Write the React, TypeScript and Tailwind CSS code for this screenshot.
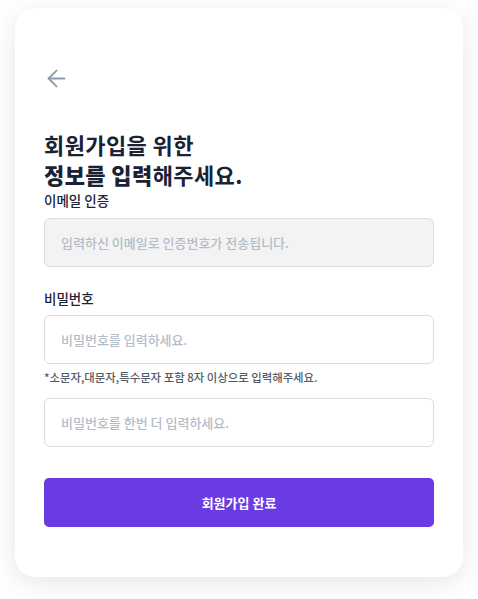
import React from "react";
import { ArrowLeft } from "lucide-react";

const font = { fontFamily: '"Noto Sans CJK KR", "Noto Sans", sans-serif' };

export default function App() {
  return (
    <div className="min-h-[599px] w-[478px] bg-white pt-2" style={font}>
      <div className="mx-[15px] w-[448px] rounded-[20px] bg-white px-[29px] pt-[57px] pb-[50px] shadow-[0_6px_24px_rgba(60,60,90,0.12)]">
        {/* Back */}
        <button className="-ml-[1px] flex h-[27px] w-[27px] items-center justify-center text-[#8b9bb3]">
          <ArrowLeft size={27} strokeWidth={1.7} />
        </button>

        <h1 className="mt-[37px] text-[22px] font-bold tracking-[0.4px] text-[#1b2234]">
          <div className="h-[30px] leading-[30px]">회원가입을 위한</div>
          <div className="h-[30px] leading-[30px]">
            <span className="font-extrabold">정보를 입력</span>해주세요.
          </div>
        </h1>

        <label className="mt-[2px] block text-[13.5px] leading-[18px] font-medium text-[#1b2234]">이메일 인증</label>
        <div className="mt-[9px] flex h-[49px] items-center rounded-[6px] border border-[#dcdcdc] bg-[#f3f3f3] px-4 text-[13px] font-medium text-[#b4bcc8]">
          입력하신 이메일로 인증번호가 전송됩니다.
        </div>

        <label className="mt-[22px] block text-[13.5px] leading-[18px] font-medium text-[#1b2234]">비밀번호</label>
        <input
          className="mt-[8px] block h-[49px] w-full rounded-[6px] border border-[#dcdcdc] bg-white px-4 text-[13px] font-medium outline-none placeholder:text-[#b4bcc8]"
          placeholder="비밀번호를 입력하세요."
          type="password"
        />
        <p className="mt-[5px] text-[11.4px] leading-[16px] font-medium text-[#555b66]">
          *소문자,대문자,특수문자 포함 8자 이상으로 입력해주세요.
        </p>
        <input
          className="mt-[13px] block h-[49px] w-full rounded-[6px] border border-[#dcdcdc] bg-white px-4 text-[13px] font-medium outline-none placeholder:text-[#b4bcc8]"
          placeholder="비밀번호를 한번 더 입력하세요."
          type="password"
        />

        <button className="mt-[31px] flex h-[49px] w-full items-center justify-center rounded-[5px] bg-[#6a3ae3] text-[13px] font-bold text-white">
          회원가입 완료
        </button>
      </div>
    </div>
  );
}
